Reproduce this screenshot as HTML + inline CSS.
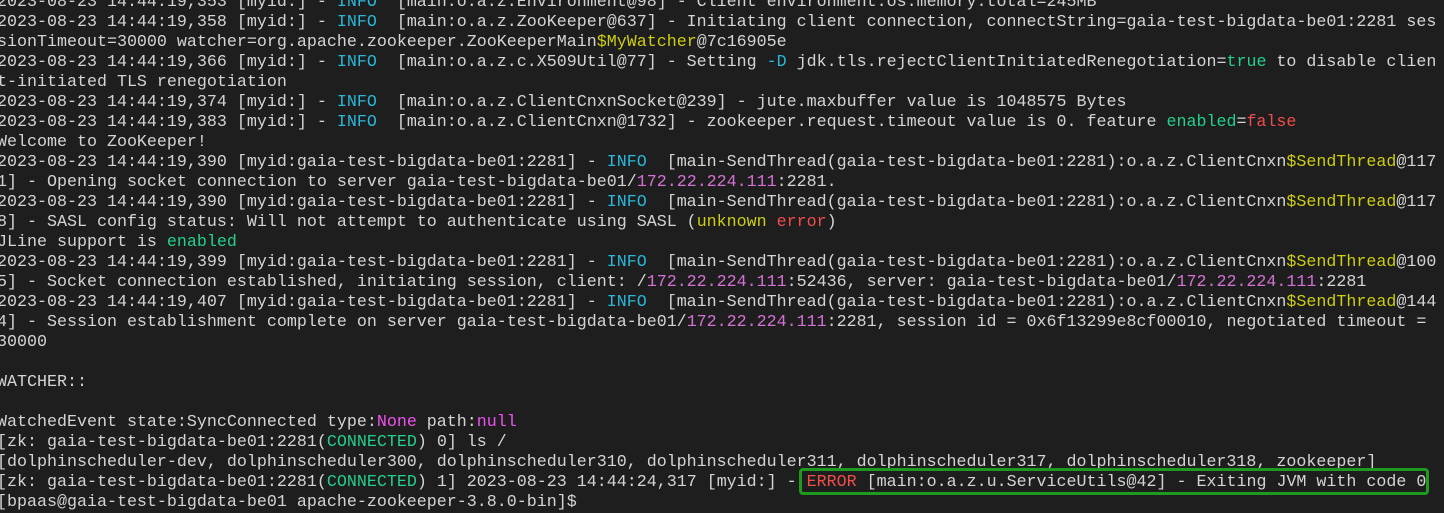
<!DOCTYPE html>
<html><head><meta charset="utf-8"><style>
html,body{margin:0;padding:0;background:#1e1e1e;width:1444px;height:511px;overflow:hidden}
pre{position:absolute;left:-3px;top:-7px;margin:0;font-family:"Liberation Mono",monospace;font-size:16.67px;line-height:20px;color:#d4d4d4;white-space:pre}
.i{color:#29b8db}.y{color:#cdcd12}.g{color:#23d18b}.r{color:#f14c4c}.m{color:#d670d6}.p{color:#f050f0}
.box{position:absolute;left:799px;top:468px;width:624px;height:21px;border:3px solid #1e9a1e;border-radius:4px}
</style></head><body>
<pre>2023-08-23 14:44:19,353 [myid:] - <span class="i">INFO</span>  [main:o.a.z.Environment@98] - Client environment:os.memory.total=245MB
2023-08-23 14:44:19,358 [myid:] - <span class="i">INFO</span>  [main:o.a.z.ZooKeeper@637] - Initiating client connection, connectString=gaia-test-bigdata-be01:2281 ses
sionTimeout=30000 watcher=org.apache.zookeeper.ZooKeeperMain<span class="y">$MyWatcher</span>@7c16905e
2023-08-23 14:44:19,366 [myid:] - <span class="i">INFO</span>  [main:o.a.z.c.X509Util@77] - Setting <span class="i">-D</span> jdk.tls.rejectClientInitiatedRenegotiation=<span class="g">true</span> to disable clien
t-initiated TLS renegotiation
2023-08-23 14:44:19,374 [myid:] - <span class="i">INFO</span>  [main:o.a.z.ClientCnxnSocket@239] - jute.maxbuffer value is 1048575 Bytes
2023-08-23 14:44:19,383 [myid:] - <span class="i">INFO</span>  [main:o.a.z.ClientCnxn@1732] - zookeeper.request.timeout value is 0. feature <span class="g">enabled</span>=<span class="r">false</span>
Welcome to ZooKeeper!
2023-08-23 14:44:19,390 [myid:gaia-test-bigdata-be01:2281] - <span class="i">INFO</span>  [main-SendThread(gaia-test-bigdata-be01:2281):o.a.z.ClientCnxn<span class="y">$SendThread</span>@117
1] - Opening socket connection to server gaia-test-bigdata-be01/<span class="m">172.22.224.111</span>:2281.
2023-08-23 14:44:19,390 [myid:gaia-test-bigdata-be01:2281] - <span class="i">INFO</span>  [main-SendThread(gaia-test-bigdata-be01:2281):o.a.z.ClientCnxn<span class="y">$SendThread</span>@117
8] - SASL config status: Will not attempt to authenticate using SASL (<span class="y">unknown</span> <span class="r">error</span>)
JLine support is <span class="g">enabled</span>
2023-08-23 14:44:19,399 [myid:gaia-test-bigdata-be01:2281] - <span class="i">INFO</span>  [main-SendThread(gaia-test-bigdata-be01:2281):o.a.z.ClientCnxn<span class="y">$SendThread</span>@100
5] - Socket connection established, initiating session, client: /<span class="m">172.22.224.111</span>:52436, server: gaia-test-bigdata-be01/<span class="m">172.22.224.111</span>:2281
2023-08-23 14:44:19,407 [myid:gaia-test-bigdata-be01:2281] - <span class="i">INFO</span>  [main-SendThread(gaia-test-bigdata-be01:2281):o.a.z.ClientCnxn<span class="y">$SendThread</span>@144
4] - Session establishment complete on server gaia-test-bigdata-be01/<span class="m">172.22.224.111</span>:2281, session id = 0x6f13299e8cf00010, negotiated timeout =
30000

WATCHER::

WatchedEvent state:SyncConnected type:<span class="p">None</span> path:<span class="p">null</span>
[zk: gaia-test-bigdata-be01:2281(<span class="g">CONNECTED</span>) 0] ls /
[dolphinscheduler-dev, dolphinscheduler300, dolphinscheduler310, dolphinscheduler311, dolphinscheduler317, dolphinscheduler318, zookeeper]
[zk: gaia-test-bigdata-be01:2281(<span class="g">CONNECTED</span>) 1] 2023-08-23 14:44:24,317 [myid:] - <span class="r">ERROR</span> [main:o.a.z.u.ServiceUtils@42] - Exiting JVM with code 0
[bpaas@gaia-test-bigdata-be01 apache-zookeeper-3.8.0-bin]$</pre>
<div class="box"></div>
</body></html>
